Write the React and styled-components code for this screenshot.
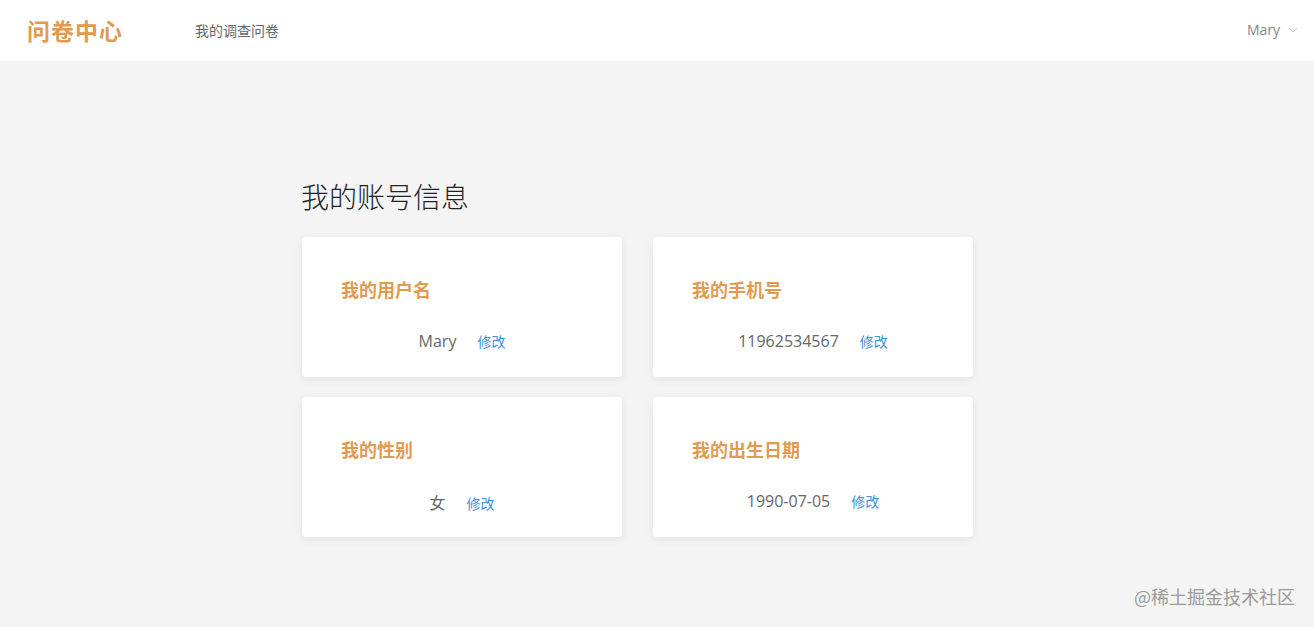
import React from 'react';
import styled, { createGlobalStyle } from 'styled-components';
import { ChevronDown } from 'lucide-react';

const GlobalStyle = createGlobalStyle`
  html, body {
    margin: 0;
    padding: 0;
    background: #f4f4f4;
    font-family: "Open Sans", "Noto Sans CJK SC", sans-serif;
  }
`

const Page = styled.div`
  min-height: 627px;
  background: #f4f4f4;
  position: relative;
`

const Header = styled.header`
  height: 61px;
  background: #fff;
  display: flex;
  align-items: center;
  padding: 0 14px 2px 27px;
  box-sizing: border-box;
`

const Logo = styled.div`
  font-family: "Noto Sans CJK SC", sans-serif;
  font-size: 23px;
  font-weight: 700;
  color: #e29a4f;
  letter-spacing: 1px;
  width: 168px;
`

const NavLink = styled.a`
  font-family: "Noto Sans CJK SC", sans-serif;
  font-size: 14px;
  color: #666;
  text-decoration: none;
`

const User = styled.div`
  margin-left: auto;
  display: flex;
  align-items: center;
  gap: 6px;
  font-size: 14px;
  color: #888;
`

const Main = styled.main`
  padding: 117px 0 0 301px;
`

const Title = styled.h2`
  margin: 0 0 23px;
  font-family: "Noto Sans CJK SC", sans-serif;
  font-size: 28px;
  font-weight: 300;
  line-height: 36px;
  color: #222;
`

const Grid = styled.div`
  display: grid;
  grid-template-columns: 320px 320px;
  column-gap: 31px;
  row-gap: 20px;
  padding-left: 1px;
`

const Card = styled.div`
  height: 140px;
  background: #fff;
  border-radius: 4px;
  box-shadow: 0 2px 10px rgba(0, 0, 0, 0.08);
  box-sizing: border-box;
  padding: 40px 39px 0;
`

const CardTitle = styled.div`
  font-family: "Noto Sans CJK SC", sans-serif;
  font-size: 18px;
  font-weight: 700;
  color: #e29a4f;
  line-height: 24px;
`

const ValueRow = styled.div`
  margin-top: 29px;
  display: flex;
  justify-content: center;
  align-items: baseline;
  gap: 21px;
`

const Value = styled.span`
  font-size: 16px;
  color: #666;
`

const Edit = styled.a`
  font-family: "Noto Sans CJK SC", sans-serif;
  font-size: 14px;
  color: #3d8fe0;
  cursor: pointer;
`

const Watermark = styled.div`
  position: absolute;
  right: 19px;
  bottom: 18px;
  font-family: "Noto Sans CJK SC", sans-serif;
  font-size: 18px;
  color: #9a9a9a;
`

const items = [
  { label: '我的用户名', value: 'Mary' },
  { label: '我的手机号', value: '11962534567' },
  { label: '我的性别', value: '女' },
  { label: '我的出生日期', value: '1990-07-05' },
]

export default function App() {
  return (
    <Page>
      <GlobalStyle />
      <Header>
        <Logo>问卷中心</Logo>
        <NavLink>我的调查问卷</NavLink>
        <User>
          Mary
          <ChevronDown size={14} color="#aaa" strokeWidth={1.5} />
        </User>
      </Header>
      <Main>
        <Title>我的账号信息</Title>
        <Grid>
          {items.map((it) => (
            <Card key={it.label}>
              <CardTitle>{it.label}</CardTitle>
              <ValueRow>
                <Value>{it.value}</Value>
                <Edit>修改</Edit>
              </ValueRow>
            </Card>
          ))}
        </Grid>
      </Main>
      <Watermark>@稀土掘金技术社区</Watermark>
    </Page>
  )
}
